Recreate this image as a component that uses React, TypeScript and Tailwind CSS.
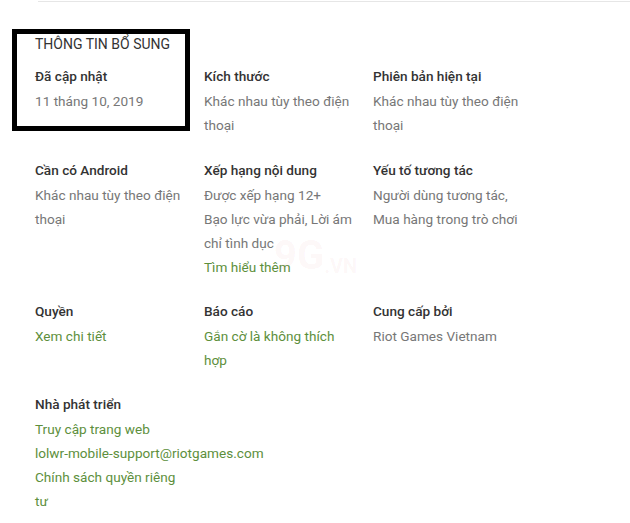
const LINK = 'text-[#5d8f3c]';

type Item = { text: string; link?: boolean; nowrap?: boolean };
type Entry = { label: string; items: Item[] };

const rows: Entry[][] = [
  [
    { label: 'Đã cập nhật', items: [{ text: '11 tháng 10, 2019' }] },
    { label: 'Kích thước', items: [{ text: 'Khác nhau tùy theo điện thoại' }] },
    { label: 'Phiên bản hiện tại', items: [{ text: 'Khác nhau tùy theo điện thoại' }] },
  ],
  [
    { label: 'Cần có Android', items: [{ text: 'Khác nhau tùy theo điện thoại' }] },
    {
      label: 'Xếp hạng nội dung',
      items: [
        { text: 'Được xếp hạng 12+' },
        { text: 'Bạo lực vừa phải, Lời ám chỉ tình dục' },
        { text: 'Tìm hiểu thêm', link: true },
      ],
    },
    {
      label: 'Yếu tố tương tác',
      items: [{ text: 'Người dùng tương tác,' }, { text: 'Mua hàng trong trò chơi' }],
    },
  ],
  [
    { label: 'Quyền', items: [{ text: 'Xem chi tiết', link: true }] },
    { label: 'Báo cáo', items: [{ text: 'Gắn cờ là không thích hợp', link: true }] },
    { label: 'Cung cấp bởi', items: [{ text: 'Riot Games Vietnam' }] },
  ],
  [
    {
      label: 'Nhà phát triển',
      items: [
        { text: 'Truy cập trang web', link: true },
        { text: 'lolwr-mobile-support@riotgames.com', link: true, nowrap: true },
        { text: 'Chính sách quyền riêng tư', link: true },
      ],
    },
  ],
];

const Block = ({ entry }: { entry: Entry }) => (
  <div className="w-[150px]">
    <div className="text-[13.6px] leading-[20px] font-medium text-[#333333] mb-[3px]">{entry.label}</div>
    {entry.items.map((it) => (
      <div
        key={it.text}
        className={`text-[13.6px] leading-[24px] ${it.link ? LINK : 'text-[#777777]'} ${it.nowrap ? 'whitespace-nowrap' : ''}`}
      >
        {it.text}
      </div>
    ))}
  </div>
);

export default function App() {
  return (
    <div
      className="relative w-[630px] h-[523px] bg-white overflow-hidden"
      style={{ fontFamily: 'Roboto, "Noto Sans", sans-serif' }}
    >
      <div className="mt-px ml-[38px] h-px bg-[#e6e6e6]" />

      <div className="pl-[35px] pt-[32px]">
        <h2 className="text-[14px] leading-[20px] text-[#333333] uppercase">Thông tin bổ sung</h2>
        <div className="mt-[12px] flex flex-col gap-[22px]">
          {rows.map((row, i) => (
            <div key={i} className={`grid grid-cols-[150px_150px_150px] gap-x-[19px] ${i === 0 ? 'mb-px' : ''}`}>
              {row.map((e) => (
                <Block key={e.label} entry={e} />
              ))}
            </div>
          ))}
        </div>
      </div>

      {/* faint watermark */}
      <div className="absolute left-[274px] top-[236px] flex items-end font-bold leading-none text-[#d33]/[0.05] select-none pointer-events-none">
        <span className="text-[40px]">9G</span>
        <span className="text-[20px]">.VN</span>
      </div>

      {/* highlight box */}
      <div className="absolute left-[12px] top-[29px] w-[178px] h-[102px] border-[5px] border-black" />
    </div>
  );
}
